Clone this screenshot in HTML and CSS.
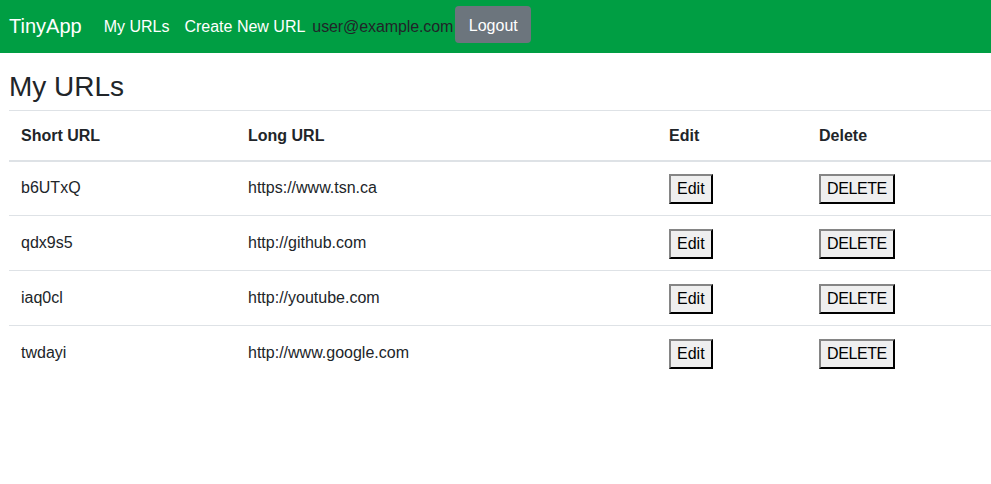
FILE: index.html
```html
<!DOCTYPE html>
<html lang="en">
<head>
<meta charset="utf-8">
<title>TinyApp</title>
<link rel="stylesheet" href="styles.css">
</head>
<body>
<nav class="navbar">
  <a class="brand" href="#">TinyApp</a>
  <a class="nav-link" href="#">My URLs</a>
  <a class="nav-link" href="#">Create New URL</a>
  <span class="user">user@example.com</span>
  <button class="logout">Logout</button>
</nav>
<main class="main">
  <h1 class="title">My URLs</h1>
  <table class="table">
    <thead>
      <tr>
        <th class="c1">Short URL</th>
        <th class="c2">Long URL</th>
        <th class="c3">Edit</th>
        <th class="c4">Delete</th>
      </tr>
    </thead>
    <tbody>
      <tr><td>b6UTxQ</td><td>https://www.tsn.ca</td><td><button class="btn">Edit</button></td><td><button class="btn btn-del">DELETE</button></td></tr>
      <tr><td>qdx9s5</td><td>http://github.com</td><td><button class="btn">Edit</button></td><td><button class="btn btn-del">DELETE</button></td></tr>
      <tr><td>iaq0cl</td><td>http://youtube.com</td><td><button class="btn">Edit</button></td><td><button class="btn btn-del">DELETE</button></td></tr>
      <tr><td>twdayi</td><td>http://www.google.com</td><td><button class="btn">Edit</button></td><td><button class="btn btn-del">DELETE</button></td></tr>
    </tbody>
  </table>
</main>
</body>
</html>
```
FILE: styles.css
```css
* { box-sizing: border-box; }
html, body { margin: 0; padding: 0; }
body {
  font-family: "Liberation Sans", Arial, sans-serif;
  font-size: 16px;
  color: #212529;
  background: #fff;
}
.navbar {
  display: flex;
  align-items: center;
  height: 53px;
  background: #009e43;
  padding: 0 0 0 9px;
}
.brand {
  color: #fff;
  text-decoration: none;
  font-size: 20px;
  margin-right: 22px;
}
.nav-link {
  color: #fff;
  text-decoration: none;
  margin-right: 15px;
}
.nav-link + .nav-link { margin-right: 7px; }
.user { color: #212529; letter-spacing: -0.1px; }
.logout {
  margin-left: 2px;
  height: 37px;
  width: 76px;
  border: none;
  border-radius: 4px;
  background: #6c757d;
  color: #fff;
  font-family: inherit;
  font-size: 16px;
  padding: 3px 0 0;
  margin-top: -4px;
}
.main { padding-left: 9px; }
.title {
  margin: 0;
  padding-top: 18px;
  height: 57px;
  font-size: 28px;
  font-weight: 500;
  line-height: 32px;
}
.table {
  width: 982px;
  border-collapse: collapse;
}
.table th, .table td {
  text-align: left;
  padding: 0 12px;
  vertical-align: middle;
}
.table th {
  font-weight: bold;
  height: 50px;
  padding-top: 2px;
  border-top: 1px solid #dee2e6;
  border-bottom: 2px solid #dee2e6;
}
.table td { height: 55px; border-bottom: 1px solid #dee2e6; }
.table tbody tr:last-child td { border-bottom: none; }
.c1 { width: 227px; }
.c2 { width: 421px; }
.c3 { width: 150px; }
.c4 { width: 184px; }
.btn {
  font-family: inherit;
  font-size: 16px;
  color: #000;
  background: #efefef;
  border: 2px outset #767676;
  border-color: #858585 #3b3b3b #3b3b3b #858585;
  height: 30px;
  padding: 0 6px;
  margin-top: 1px;
}
.btn-del { letter-spacing: -0.4px; }
```
